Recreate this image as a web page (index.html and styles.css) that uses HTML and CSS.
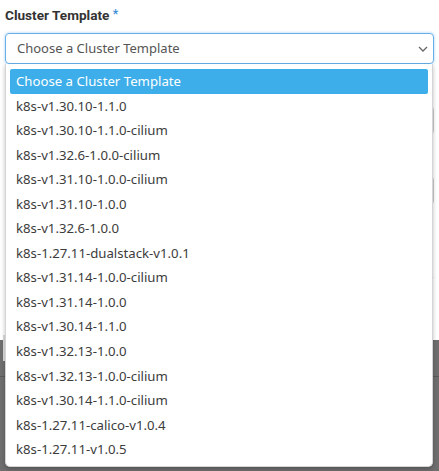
FILE: index.html
```html
<!DOCTYPE html>
<html>
<head>
<title>Create Cluster</title>
<link rel="stylesheet" href="styles.css">
</head>
<body>
<div class="modal-body">
  <div class="form-group">
    <label class="control-label">Cluster Template <span class="required">*</span></label>
    <div class="select-wrap">
      <div class="form-select">Choose a Cluster Template</div>
      <svg class="chevron" width="10" height="6" viewBox="0 0 10 6"><path d="M1 1 L5 5 L9 1" fill="none" stroke="#666" stroke-width="1.3"/></svg>
      <div class="dropdown">
        <div class="option selected">Choose a Cluster Template</div>
        <div class="option">k8s-v1.30.10-1.1.0</div>
        <div class="option">k8s-v1.30.10-1.1.0-cilium</div>
        <div class="option">k8s-v1.32.6-1.0.0-cilium</div>
        <div class="option">k8s-v1.31.10-1.0.0-cilium</div>
        <div class="option">k8s-v1.31.10-1.0.0</div>
        <div class="option">k8s-v1.32.6-1.0.0</div>
        <div class="option">k8s-1.27.11-dualstack-v1.0.1</div>
        <div class="option">k8s-v1.31.14-1.0.0-cilium</div>
        <div class="option">k8s-v1.31.14-1.0.0</div>
        <div class="option">k8s-v1.30.14-1.1.0</div>
        <div class="option">k8s-v1.32.13-1.0.0</div>
        <div class="option">k8s-v1.32.13-1.0.0-cilium</div>
        <div class="option">k8s-v1.30.14-1.1.0-cilium</div>
        <div class="option">k8s-1.27.11-calico-v1.0.4</div>
        <div class="option">k8s-1.27.11-v1.0.5</div>
      </div>
    </div>
  </div>
  <div class="form-input first"></div>
  <div class="form-input"></div>
  <div class="rule"></div>
</div>
<div class="backdrop">
  <div class="btn-strip">f</div>
  <div class="backdrop-rule"></div>
</div>
</body>
</html>
```

FILE: styles.css
```css
/* Create cluster dialog, template select open */

body
{ margin: 0;
background-color: #ffffff;
font-family: "Noto Sans", sans-serif;
}

div.modal-body
{ height: 340px;
padding: 5px 5px 0 5px;
box-sizing: border-box;
}

label.control-label
{ display: block;
font-family: Roboto, "Noto Sans", sans-serif;
font-weight: bold;
font-size: 13.6px;
color: #333333;
height: 28px;
line-height: 19px;
}

span.required
{ color: #3a8fd8;
vertical-align: 2px;
font-size: 12px;
}

div.select-wrap
{ position: relative;
}

div.form-select
{ height: 31px;
box-sizing: border-box;
border: 1px solid #66afe9;
border-radius: 4px;
box-shadow: 0 0 3px rgba(102, 175, 233, 0.6);
padding-left: 11px;
line-height: 29px;
font-size: 13px;
color: #555555;
}

svg.chevron
{ position: absolute;
right: 6px;
top: 13px;
}

div.form-input
{ height: 27px;
border: 1px solid #cccccc;
border-radius: 4px;
margin-top: 41px;
}

div.form-input.first
{ margin-top: 42px;
}

div.rule
{ border-top: 1px solid #e5e5e5;
margin-top: 72px;
}

div.dropdown
{ position: absolute;
left: 0;
top: 31px;
width: 428px;
box-sizing: border-box;
background-color: #ffffff;
border: 1px solid #d4d4d4;
border-top: none;
border-radius: 0 0 5px 5px;
box-shadow: 0 2px 4px rgba(0, 0, 0, 0.25);
padding: 5px 4px 4px 4px;
z-index: 10;
}

div.option
{ height: 24.55px;
line-height: 24.55px;
padding-left: 6px;
font-size: 13.2px;
color: #3c3c3c;
}

div.option.selected
{ background-color: #3daee9;
color: #ffffff;
border-radius: 2px;
}

div.backdrop
{ height: 131px;
background-color: #6e6e6e;
position: relative;
}

div.btn-strip
{ width: 9px;
height: 26px;
margin-left: 3px;
background-color: #dcdcdc;
font-size: 13px;
line-height: 26px;
color: #333333;
overflow: hidden;
text-indent: 2px;
position: relative;
top: -5px;
}

div.backdrop-rule
{ border-top: 1px solid #5a5a5a;
margin-top: 10px;
}
```
